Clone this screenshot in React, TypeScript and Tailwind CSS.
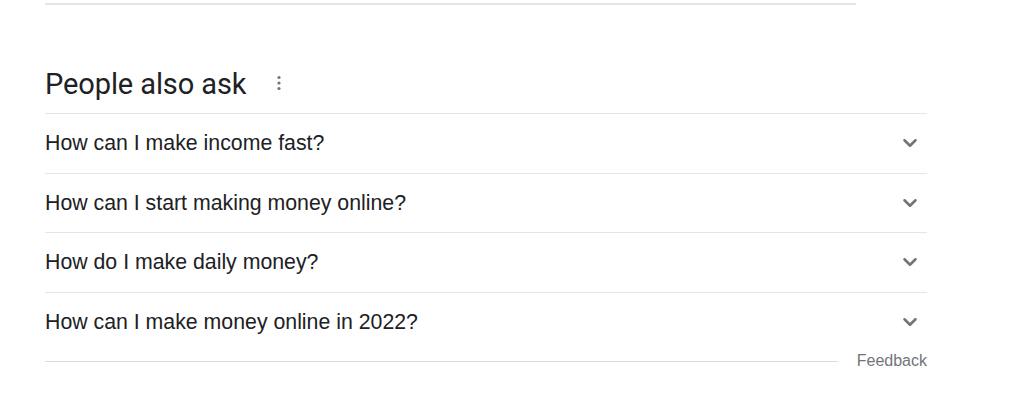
import { ChevronDown } from "lucide-react";

const questions = [
  "How can I make income fast?",
  "How can I start making money online?",
  "How do I make daily money?",
  "How can I make money online in 2022?",
];

export default function App() {
  return (
    <div className="w-[1024px] h-[400px] bg-white overflow-hidden font-['Roboto',_'Liberation_Sans',_sans-serif] text-[#202124]">
      <div className="ml-[45px] w-[882px]">
        {/* end of previous result */}
        <div className="mt-[3px] w-[811px] border-t-2 border-[#e4e4e4]" />

        <div className="mt-[60px] flex items-center h-[38px]">
          <h2 className="text-[29px] leading-[38px] font-normal tracking-[-0.1px]">People also ask</h2>
          <svg className="ml-[25px] mt-[-2px]" width="16" height="16" viewBox="0 0 16 16" fill="#70757a">
            <circle cx="8" cy="2.5" r="1.6" />
            <circle cx="8" cy="8" r="1.6" />
            <circle cx="8" cy="13.5" r="1.6" />
          </svg>
        </div>

        <div className="mt-[10px] border-t border-[#e6e6e6]">
          {questions.map((q) => (
            <div
              key={q}
              className="flex items-center justify-between h-[59.5px] border-b border-[#e6e6e6] last:border-b-0"
            >
              <span className="font-['Liberation_Sans',_Arial,_sans-serif] text-[21.3px] leading-6">{q}</span>
              <ChevronDown className="mr-[6px] text-[#70757a]" size={22} strokeWidth={2.8} />
            </div>
          ))}
        </div>

        <div className="flex items-center gap-[19px] mt-[-1px]">
          <div className="flex-1 border-t border-[#dadce0]" />
          <span className="font-['Liberation_Sans',_Arial,_sans-serif] text-[16px] leading-5 text-[#70757a]">Feedback</span>
        </div>
      </div>
    </div>
  );
}
